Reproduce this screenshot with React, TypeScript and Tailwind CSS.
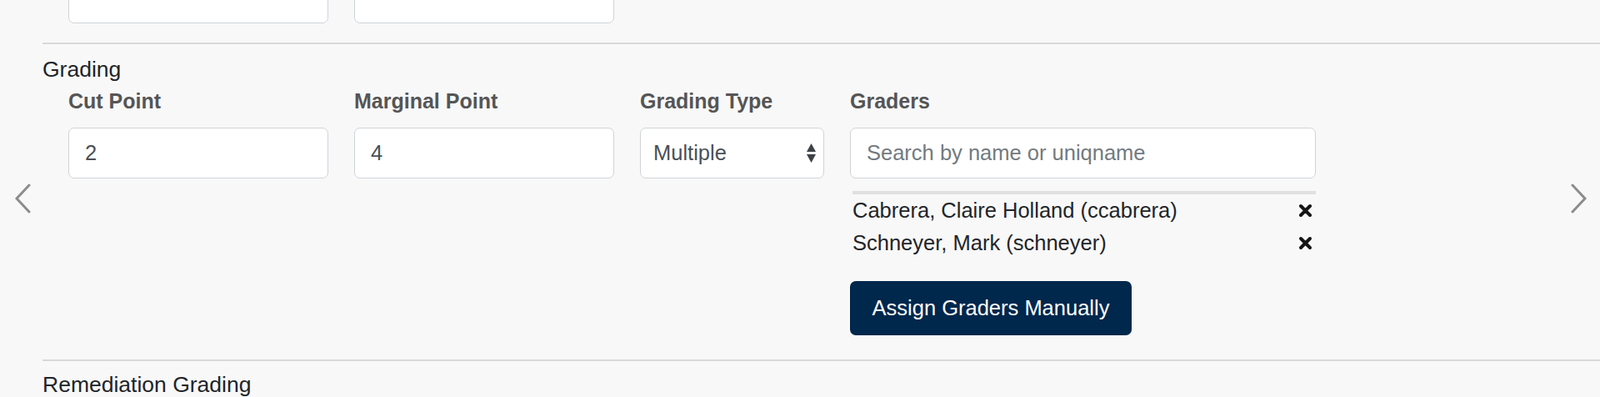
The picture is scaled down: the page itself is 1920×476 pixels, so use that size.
import React from "react";

const graders = [
  "Cabrera, Claire Holland (ccabrera)",
  "Schneyer, Mark (schneyer)",
];

const TextInput = ({ value, placeholder, width }: { value?: string; placeholder?: string; width: string }) => (
  <input
    readOnly
    value={value ?? ""}
    placeholder={placeholder}
    className={`${width} h-[61px] rounded-[7px] border-[1.5px] border-[#cfd4da] bg-white px-[19px] text-[25.5px] text-[#495057] placeholder:text-[#737a80] outline-none`}
  />
);

const RemoveIcon = () => (
  <svg width="17" height="17" viewBox="0 0 17 17" aria-hidden="true">
    <path d="M3 3 L14 14 M14 3 L3 14" stroke="#151515" strokeWidth="4" strokeLinecap="round" />
  </svg>
);

const App = () => {
  return (
    <div className="relative min-h-screen w-full overflow-hidden bg-[#f8f8f8] font-['Liberation_Sans',Arial,sans-serif]">
      {/* carousel arrows */}
      <svg className="absolute left-[18px] top-[220px]" width="20" height="36" viewBox="0 0 20 36" aria-hidden="true">
        <path d="M17 2 L2 18 L17 34" fill="none" stroke="#8c8c8c" strokeWidth="3" strokeLinecap="round" />
      </svg>
      <svg className="absolute right-[16px] top-[220px]" width="20" height="36" viewBox="0 0 20 36" aria-hidden="true">
        <path d="M3 2 L18 18 L3 34" fill="none" stroke="#8c8c8c" strokeWidth="3" strokeLinecap="round" />
      </svg>

      <div className="pl-[51px]">
        {/* previous section, scrolled partly out of view */}
        <div className="-mt-[33px] flex gap-[31px] pl-[31px]">
          <TextInput width="w-[312px]" />
          <TextInput width="w-[312px]" />
        </div>

        <div className="mt-[23px] h-[2px] bg-[#d9d9d9]" />

        {/* Grading */}
        <h3 className="mt-[15px] text-[26.5px] leading-[30px] text-[#212529]">Grading</h3>
        <div className="mt-[8px] flex gap-[31px] pl-[31px]">
          <div className="flex w-[312px] flex-col">
            <label className="text-[25px] font-bold leading-[30px] text-[#555555]">Cut Point</label>
            <div className="mt-[17px]">
              <TextInput value="2" width="w-[312px]" />
            </div>
          </div>

          <div className="flex w-[312px] flex-col">
            <label className="text-[25px] font-bold leading-[30px] text-[#555555]">Marginal Point</label>
            <div className="mt-[17px]">
              <TextInput value="4" width="w-[312px]" />
            </div>
          </div>

          <div className="flex w-[221px] flex-col">
            <label className="text-[25px] font-bold leading-[30px] text-[#555555]">Grading Type</label>
            <div className="mt-[17px] flex h-[61px] items-center justify-between rounded-[7px] border-[1.5px] border-[#cfd4da] bg-white pl-[15px] pr-[9px]">
              <span className="text-[25.5px] text-[#495057]">Multiple</span>
              <svg width="11" height="24" viewBox="0 0 11 24" aria-hidden="true">
                <path d="M5.5 0 L11 10 L0 10 Z M0 13 L11 13 L5.5 23 Z" fill="#3d4247" />
              </svg>
            </div>
          </div>

          <div className="flex w-[559px] flex-col">
            <label className="text-[25px] font-bold leading-[30px] text-[#555555]">Graders</label>
            <div className="mt-[17px]">
              <TextInput placeholder="Search by name or uniqname" width="w-[559px]" />
            </div>
            <div className="ml-[3px] mt-[15px] h-[4px] bg-[#e0e0e0]" />
            <ul className="pl-[3px] pr-[4px]">
              {graders.map((name) => (
                <li key={name} className="flex h-[39px] items-center justify-between">
                  <span className="text-[25.5px] text-[#212529]">{name}</span>
                  <RemoveIcon />
                </li>
              ))}
            </ul>
            <button className="mt-[26px] flex h-[65px] w-[338px] items-center justify-center rounded-[7px] bg-[#00274c] text-[25.5px] text-white">
              Assign Graders Manually
            </button>
          </div>
        </div>

        <div className="mt-[29px] h-[2px] bg-[#d9d9d9]" />

        <h3 className="mt-[13px] text-[26.5px] leading-[30px] text-[#212529]">Remediation Grading</h3>
      </div>
    </div>
  );
};

export default App;
